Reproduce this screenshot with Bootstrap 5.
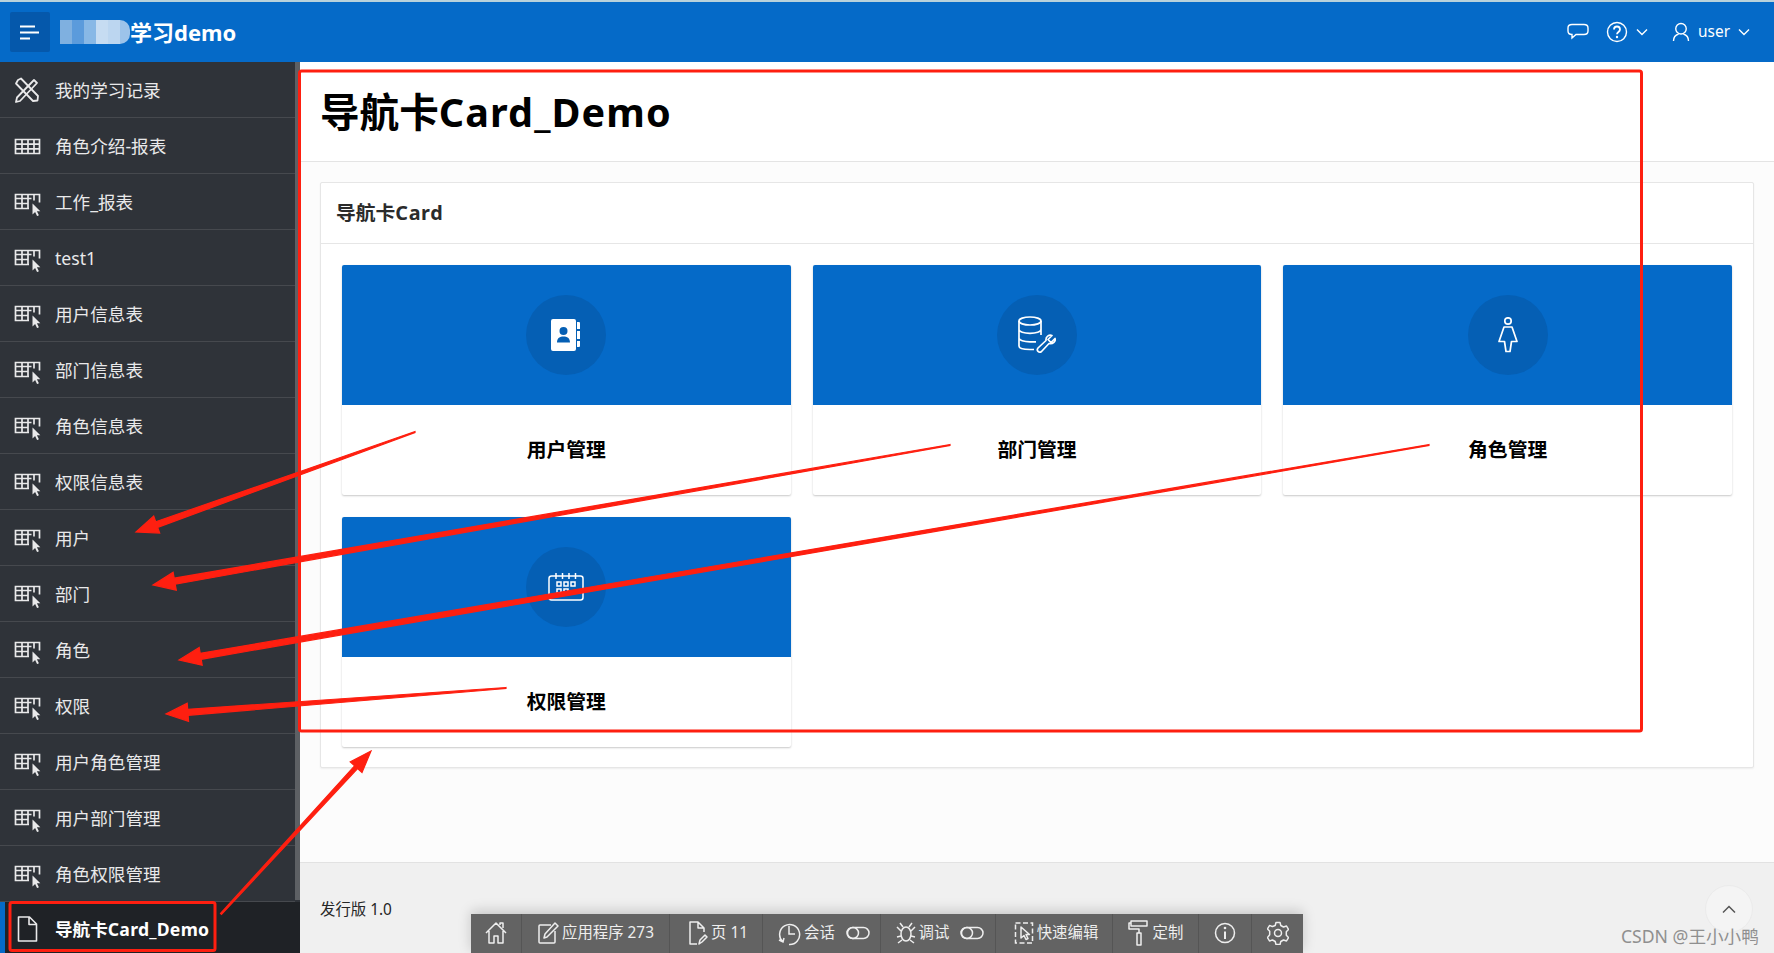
<!DOCTYPE html>
<html lang="zh-CN">
<head>
<meta charset="utf-8">
<title>导航卡Card_Demo</title>
<link href="https://cdn.jsdelivr.net/npm/bootstrap@5.3.0/dist/css/bootstrap.min.css" rel="stylesheet">
<style>
html,body{height:953px;overflow:hidden}
body{font-family:"Noto Sans","Noto Sans CJK SC",sans-serif;background:#fcfcfc;color:#000;position:relative;border-top:2px solid #b9d2dc}
.topbar{height:60px;background:#056ac8;padding:0;flex-wrap:nowrap}
.menu-btn{width:40px;height:40px;margin:0 0 0 10px;background:#0558ab;border-radius:2px;border:0;padding:0}
.mosaic{display:block;width:70px;height:24px;margin-left:10px;border-radius:0 10px 10px 0;background:linear-gradient(90deg,#7fb0e0 0 12px,#5b9bdc 12px 24px,#88b8e6 24px 36px,#c6dcf2 36px 48px,#bcd6f0 48px 60px,#9cc3ea 60px 70px)}
.logo-text{font-size:22px;font-weight:700;color:#fff;line-height:1}
.top-actions{color:#fff;font-size:15.4px}
.side{width:300px;flex:none;background:#2f3339;height:891px;overflow:hidden}
.side-list{width:295px;background:transparent;border-radius:0}
.side-scroll{width:5px;background:#5d6064;height:838px;flex:none}
.side-item{display:flex;align-items:center;height:56px;padding:1px 0 0 13px;gap:14px;color:#e9e9ea;font-size:17.6px;background:transparent;border:0;border-bottom:1px solid #46494e;border-radius:0!important;white-space:nowrap}
.side-item svg{width:28px;height:28px;flex:none}
.side-active{width:300px;background:#1f2226;color:#fff;font-weight:700;box-shadow:inset 5px 0 0 #056ac8;border-bottom:0;height:52px;padding-top:2px}
.side-active span{letter-spacing:.25px}
.main-col{min-width:0;height:891px}
.title-bar{height:100px;background:#fff;border-bottom:1px solid #e4e4e4;padding:3px 20px 0}
.title-bar h1{font-size:39.6px;font-weight:700;margin:0;line-height:1.2}
.title-bar h1 span{letter-spacing:1.1px}
.region{margin:20px 20px 0;border-color:#e6e6e6;border-radius:2px;height:586px;box-shadow:0 1px 2px rgba(0,0,0,.06)}
.region .card-header{height:61px;background:#fff;border-color:#e6e6e6;padding:0 15px;display:flex;align-items:center}
.region h2{font-size:19.8px;font-weight:700;color:#2b2b2b;margin:0}
.region h2 span{letter-spacing:.6px}
.region .card-body{padding:21px 21px 0}
.tiles{--bs-gutter-x:22px;--bs-gutter-y:22px}
.tile{height:230px;border:0;border-radius:2px;box-shadow:0 1px 2px rgba(0,0,0,.22)}
.tile-top{height:140px;background:#056ac8;border-radius:2px 2px 0 0}
.tile-circle{width:80px;height:80px;border-radius:50%;background:#055fb4}
.tile-name{font-size:19.8px;font-weight:700;color:#000;line-height:1}
.foot{margin-top:auto;height:91px;background:#f0f0f0;border-top:1px solid #e2e2e2;padding:37px 20px 0;font-size:15.4px;color:#262626;line-height:1.3}
.dev-bar{position:absolute;left:471px;bottom:0;height:39px;background:#636363;color:#eee;font-size:15.4px;box-shadow:0 -3px 12px rgba(0,0,0,.18);white-space:nowrap}
.dev-cell{height:39px;border-right:1px solid #555;gap:3px;justify-content:center;padding-bottom:1px}
.dev-cell:last-child{border-right:0}
.dev-shift{padding-left:4px}
.to-top{position:absolute;left:1705px;top:883px;width:48px;height:48px;border-radius:50%;background:#f4f4f4;border:1px solid #ebebeb}
.mark-wm{position:absolute;left:1621px;top:922px;font-size:17.6px;line-height:24px;color:#8f8f8f;white-space:nowrap}
.anno{position:absolute;left:0;top:-2px;pointer-events:none}
</style>
</head>
<body>
<svg width="0" height="0" class="position-absolute">
  <symbol id="i-table" viewBox="0 0 28 28"><path fill="none" stroke="#e9e9ea" stroke-width="1.700" d="M2.500 7.500h24v14h-24zM2.500 12.200h24M2.500 16.900h24M9 7.500v14M15 7.500v14M21 7.500v14"/></symbol>
  <symbol id="i-cursor" viewBox="0 0 28 28"><path fill="none" stroke="#e9e9ea" stroke-width="1.700" d="M16 20.500H2.500V6.500h24v8M2.500 10.500h16M2.500 15.500h13M9 6.500v14M15 6.500v14M21 6.500v6"/><path fill="#e9e9ea" d="M19.500 15.500v11l2.600-2.400 2 4 1.800-.8-2-4h3.400z"/></symbol>
  <symbol id="i-tools" viewBox="0 0 28 28"><g fill="none" stroke="#e9e9ea" stroke-width="1.800" stroke-linejoin="round"><path d="M5 4l3-1.500L25 20l-.5 4.500L20 25 3 7.500z"/><path d="M21 4l3 3L7 25l-4 1 1-4.500z"/></g></symbol>
  <symbol id="i-file" viewBox="0 0 28 28"><path fill="none" stroke="#e9e9ea" stroke-width="1.600" stroke-linejoin="round" d="M5.500 2h11l7 7v17h-18zM16 2v7.500h7.500"/></symbol>
</svg>

<nav class="navbar topbar d-flex justify-content-between">
  <div class="d-flex align-items-center">
    <button class="menu-btn d-flex align-items-center" aria-label="menu">
      <svg width="40" height="40" viewBox="0 0 40 40"><path stroke="#fff" stroke-width="2.200" d="M10 14.500h15M10 20.500h19M10 26.500h10"/></svg>
    </button>
    <span class="mosaic"></span>
    <span class="logo-text">学习demo</span>
  </div>
  <div class="top-actions d-flex align-items-center">
    <svg width="24" height="24" viewBox="0 0 24 24"><path fill="none" stroke="#fff" stroke-width="1.400" d="M6 4.500h12c2.500 0 4 1.500 4 3.500v3c0 2-1.500 3.500-4 3.500H10l-4 3.500v-3.500c-2.500 0-4-1.500-4-3.500V8c0-2 1.500-3.500 4-3.500z"/></svg>
    <svg width="22" height="22" viewBox="0 0 22 22" class="ms-3"><circle cx="11" cy="11" r="9.500" fill="none" stroke="#fff" stroke-width="1.400"/><path fill="none" stroke="#fff" stroke-width="1.800" d="M8 8.500c0-4 6-4 6 0 0 2.500-3 2.500-3 4.800"/><circle cx="11" cy="16" r="1.200" fill="#fff"/></svg>
    <svg width="12" height="8" viewBox="0 0 12 8" class="ms-2"><path fill="none" stroke="#fff" stroke-width="1.400" d="M1 1.500l5 5 5-5"/></svg>
    <svg width="18" height="20" viewBox="0 0 18 20" class="ms-4"><path fill="none" stroke="#fff" stroke-width="1.400" d="M9 1.500a4.800 4.800 0 0 1 0 10.500 4.800 4.800 0 0 1 0-10.500zM1.500 19c0-4 2-6 5-7M16.500 19c0-4-2-6-5-7"/></svg>
    <span class="ms-2">user</span>
    <svg width="12" height="8" viewBox="0 0 12 8" class="ms-2 me-4"><path fill="none" stroke="#fff" stroke-width="1.400" d="M1 1.500l5 5 5-5"/></svg>
  </div>
</nav>

<div class="d-flex">
  <aside class="side d-flex flex-wrap align-content-start position-relative">
    <div class="list-group side-list">
      <a class="list-group-item side-item"><svg><use href="#i-tools"/></svg>我的学习记录</a>
      <a class="list-group-item side-item"><svg><use href="#i-table"/></svg>角色介绍-报表</a>
      <a class="list-group-item side-item"><svg><use href="#i-cursor"/></svg>工作_报表</a>
      <a class="list-group-item side-item"><svg><use href="#i-cursor"/></svg>test1</a>
      <a class="list-group-item side-item"><svg><use href="#i-cursor"/></svg>用户信息表</a>
      <a class="list-group-item side-item"><svg><use href="#i-cursor"/></svg>部门信息表</a>
      <a class="list-group-item side-item"><svg><use href="#i-cursor"/></svg>角色信息表</a>
      <a class="list-group-item side-item"><svg><use href="#i-cursor"/></svg>权限信息表</a>
      <a class="list-group-item side-item"><svg><use href="#i-cursor"/></svg>用户</a>
      <a class="list-group-item side-item"><svg><use href="#i-cursor"/></svg>部门</a>
      <a class="list-group-item side-item"><svg><use href="#i-cursor"/></svg>角色</a>
      <a class="list-group-item side-item"><svg><use href="#i-cursor"/></svg>权限</a>
      <a class="list-group-item side-item"><svg><use href="#i-cursor"/></svg>用户角色管理</a>
      <a class="list-group-item side-item"><svg><use href="#i-cursor"/></svg>用户部门管理</a>
      <a class="list-group-item side-item"><svg><use href="#i-cursor"/></svg>角色权限管理</a>
      <a class="list-group-item side-item side-active"><svg><use href="#i-file"/></svg><div>导航卡<span>Card_Demo</span></div></a>
    </div>
    <div class="side-scroll position-absolute top-0 end-0"></div>
  </aside>

  <main class="main-col flex-grow-1 d-flex flex-column">
    <div class="title-bar d-flex align-items-center"><h1>导航卡<span>Card_Demo</span></h1></div>
    <section class="card region">
      <div class="card-header"><h2>导航卡<span>Card</span></h2></div>
      <div class="card-body">
        <div class="row tiles">
          <div class="col-4">
            <div class="card tile">
              <div class="tile-top d-flex align-items-center justify-content-center"><div class="tile-circle d-flex align-items-center justify-content-center">
                <svg width="30" height="32" viewBox="0 0 30 32"><path fill="#fff" fill-rule="evenodd" d="M2 0h21a2 2 0 0 1 2 2v28a2 2 0 0 1-2 2H2a2 2 0 0 1-2-2V2a2 2 0 0 1 2-2zm10.500 8a4 4 0 1 0 0 8 4 4 0 0 0 0-8zM6 23.500h13c0-4.500-3-6-6.500-6S6 19 6 23.500z"/><path fill="#fff" d="M26 3h2a1 1 0 0 1 1 1v6h-3zM26 12h3v8h-3zM26 22h3v5a1 1 0 0 1-1 1h-2z"/></svg>
              </div></div>
              <div class="flex-grow-1 d-flex align-items-center justify-content-center tile-name">用户管理</div>
            </div>
          </div>
          <div class="col-4">
            <div class="card tile">
              <div class="tile-top d-flex align-items-center justify-content-center"><div class="tile-circle d-flex align-items-center justify-content-center">
                <svg width="38" height="40" viewBox="0 0 38 40"><g fill="none" stroke="#fff" stroke-width="1.700" stroke-linejoin="round"><ellipse cx="12" cy="6" rx="11" ry="4"/><path d="M1 6v25c0 2 4 3.500 11 3.500h4M23 6v14M1 14.500c0 2.200 5 3.800 11 3.800s11-1.600 11-3.800M1 23c0 2.200 5 3.800 11 3.800h6"/><path d="M37 23.500l-4 4-3-3 4-4c-3-1-6.500 1-6 5L20 33c-2 2.500 1 5.500 3.500 3.500l7.500-8c4 1 7-2.500 6-5z"/></g></svg>
              </div></div>
              <div class="flex-grow-1 d-flex align-items-center justify-content-center tile-name">部门管理</div>
            </div>
          </div>
          <div class="col-4">
            <div class="card tile">
              <div class="tile-top d-flex align-items-center justify-content-center"><div class="tile-circle d-flex align-items-center justify-content-center">
                <svg width="20" height="36" viewBox="0 0 20 36"><g fill="none" stroke="#fff" stroke-width="1.700" stroke-linejoin="round"><circle cx="10" cy="4" r="3.200"/><path d="M6 10h8l5 14.500h-5.500L12 34.500H8L6.500 24.500H1z"/></g></svg>
              </div></div>
              <div class="flex-grow-1 d-flex align-items-center justify-content-center tile-name">角色管理</div>
            </div>
          </div>
          <div class="col-4">
            <div class="card tile">
              <div class="tile-top d-flex align-items-center justify-content-center"><div class="tile-circle d-flex align-items-center justify-content-center">
                <svg width="36" height="28" viewBox="0 0 36 28"><g fill="none" stroke="#fff" stroke-width="1.500"><rect x="1" y="3" width="34" height="24" rx="2.500"/><path d="M8 0v6M14.500 0v6M21 0v6M27.500 0v6"/><rect x="9" y="9" width="4" height="4"/><rect x="16" y="9" width="4" height="4"/><rect x="23" y="9" width="4" height="4"/><rect x="9" y="16" width="4" height="4"/><rect x="16" y="16" width="4" height="4"/></g></svg>
              </div></div>
              <div class="flex-grow-1 d-flex align-items-center justify-content-center tile-name">权限管理</div>
            </div>
          </div>
        </div>
      </div>
    </section>
    <footer class="foot">发行版 1.0</footer>
  </main>
</div>

<div class="dev-bar d-flex">
  <div class="dev-cell d-flex align-items-center" style="width:51px"><svg width="22" height="24" viewBox="0 0 22 24"><path fill="none" stroke="#eee" stroke-width="1.500" stroke-linejoin="round" d="M1 12L11 2l10 10M4 10v12h5v-7h4v7h5V10M15 4V2h3v5"/></svg></div>
  <div class="dev-cell d-flex align-items-center" style="width:148px"><svg width="22" height="24" viewBox="0 0 22 24"><path fill="none" stroke="#eee" stroke-width="1.500" stroke-linejoin="round" d="M14 4H3a1 1 0 0 0-1 1v16a1 1 0 0 0 1 1h14a1 1 0 0 0 1-1V10M7 17l1-4L18 2l3 3L10 16z"/></svg>应用程序 273</div>
  <div class="dev-cell dev-shift d-flex align-items-center" style="width:93px"><svg width="20" height="26" viewBox="0 0 20 26"><path fill="none" stroke="#eee" stroke-width="1.500" stroke-linejoin="round" d="M9 24H2V2h8l6 6v4M10 2v6h6M11 24l1-4 5-5 2 2-5 5z"/></svg>页 11</div>
  <div class="dev-cell dev-shift d-flex align-items-center" style="width:118px"><svg width="24" height="26" viewBox="0 0 24 26"><path fill="none" stroke="#eee" stroke-width="1.500" d="M6 22a10 10 0 1 1 6 2.500M12 6v8h6M2 20l4 2 1-4"/></svg>会话<svg width="24" height="14" viewBox="0 0 24 14" class="ms-2"><g fill="none" stroke="#eee" stroke-width="1.500"><rect x="1" y="1.500" width="22" height="11" rx="5.500"/><circle cx="7" cy="7" r="5.500"/></g></svg></div>
  <div class="dev-cell dev-shift d-flex align-items-center" style="width:115px"><svg width="20" height="24" viewBox="0 0 20 24"><g fill="none" stroke="#eee" stroke-width="1.500"><ellipse cx="10" cy="13" rx="5" ry="7"/><path d="M5 10L1 6M15 10l4-4M5 15l-4 1M15 15l4 1M6 19l-4 3M14 19l4 3M7 6L4 2M13 6l3-4"/></g></svg>调试<svg width="24" height="14" viewBox="0 0 24 14" class="ms-2"><g fill="none" stroke="#eee" stroke-width="1.500"><rect x="1" y="1.500" width="22" height="11" rx="5.500"/><circle cx="7" cy="7" r="5.500"/></g></svg></div>
  <div class="dev-cell dev-shift d-flex align-items-center" style="width:117px"><svg width="20" height="26" viewBox="0 0 20 26"><path fill="none" stroke="#eee" stroke-width="1.500" stroke-dasharray="5 2.500" d="M1.500 3h17v20h-17z"/><path fill="none" stroke="#eee" stroke-width="1.500" stroke-linejoin="round" d="M7 7v11l3-2.500 2 4 2-1-2-4h3.500z"/></svg>快速编辑</div>
  <div class="dev-cell d-flex align-items-center" style="width:86px"><svg width="22" height="28" viewBox="0 0 22 28"><path fill="none" stroke="#eee" stroke-width="1.500" stroke-linejoin="round" d="M3 2h16v5H3zM3 4H1v6h10v4M9 14h4v12H9z"/></svg>定制</div>
  <div class="dev-cell d-flex align-items-center" style="width:53px"><svg width="22" height="22" viewBox="0 0 22 22"><circle cx="11" cy="11" r="9.500" fill="none" stroke="#eee" stroke-width="1.500"/><path stroke="#eee" stroke-width="2" d="M11 9.500V17"/><circle cx="11" cy="6" r="1.300" fill="#eee"/></svg></div>
  <div class="dev-cell d-flex align-items-center" style="width:51px"><svg width="22" height="24" viewBox="0 0 22 24"><path fill="none" stroke="#eee" stroke-width="1.500" stroke-linejoin="round" d="M9 1.500h4l.8 3 2.700 1.500 3-1 2 3.500-2.200 2.200v3.600l2.200 2.200-2 3.500-3-1-2.700 1.500-.8 3H9l-.8-3-2.700-1.500-3 1-2-3.500L2.700 13.800v-3.600L.500 8 2.500 4.500l3 1L8.200 4.500z"/><circle cx="11" cy="12" r="3.500" fill="none" stroke="#eee" stroke-width="1.500"/></svg></div>
</div>

<div class="to-top d-flex align-items-center justify-content-center"><svg width="14" height="9" viewBox="0 0 14 9"><path fill="none" stroke="#555" stroke-width="1.500" d="M1 7.500l6-6 6 6"/></svg></div>
<div class="mark-wm">CSDN @王小小鸭</div>

<svg class="anno" width="1774" height="953" viewBox="0 0 1774 953">
  <rect x="299.500" y="71" width="1342" height="660" rx="2" fill="none" stroke="#fe1f10" stroke-width="3"/>
  <rect x="10" y="902.500" width="205" height="48" rx="2" fill="none" stroke="#fe1f10" stroke-width="3"/>
  <g fill="#fe1f10" stroke="#fe1f10" stroke-width="1.200">
    <polygon points="415,431.500 155.700,521.800 153.700,516.100 136,532 159.700,533.100 157.700,527.400 415,432.500"/>
    <polygon points="950,444.500 174.200,578.200 173.100,572.300 153,585 176.300,590.100 175.200,584.200 950,445.500"/>
    <polygon points="1429,444.500 200.200,653.300 199.200,647.400 179,660 202.200,665.200 201.200,659.300 1429,445.500"/>
    <polygon points="506,687.500 187.700,709.300 187.200,703.300 166,714 188.600,721.300 188.100,715.300 506,688.500"/>
    <polygon points="220.500,913.500 354.600,765.800 350.200,761.800 371,751 362,772.600 357.600,768.600 221.500,914.500"/>
  </g>
</svg>
<script src="https://cdn.jsdelivr.net/npm/bootstrap@5.3.0/dist/js/bootstrap.bundle.min.js"></script>
</body>
</html>
